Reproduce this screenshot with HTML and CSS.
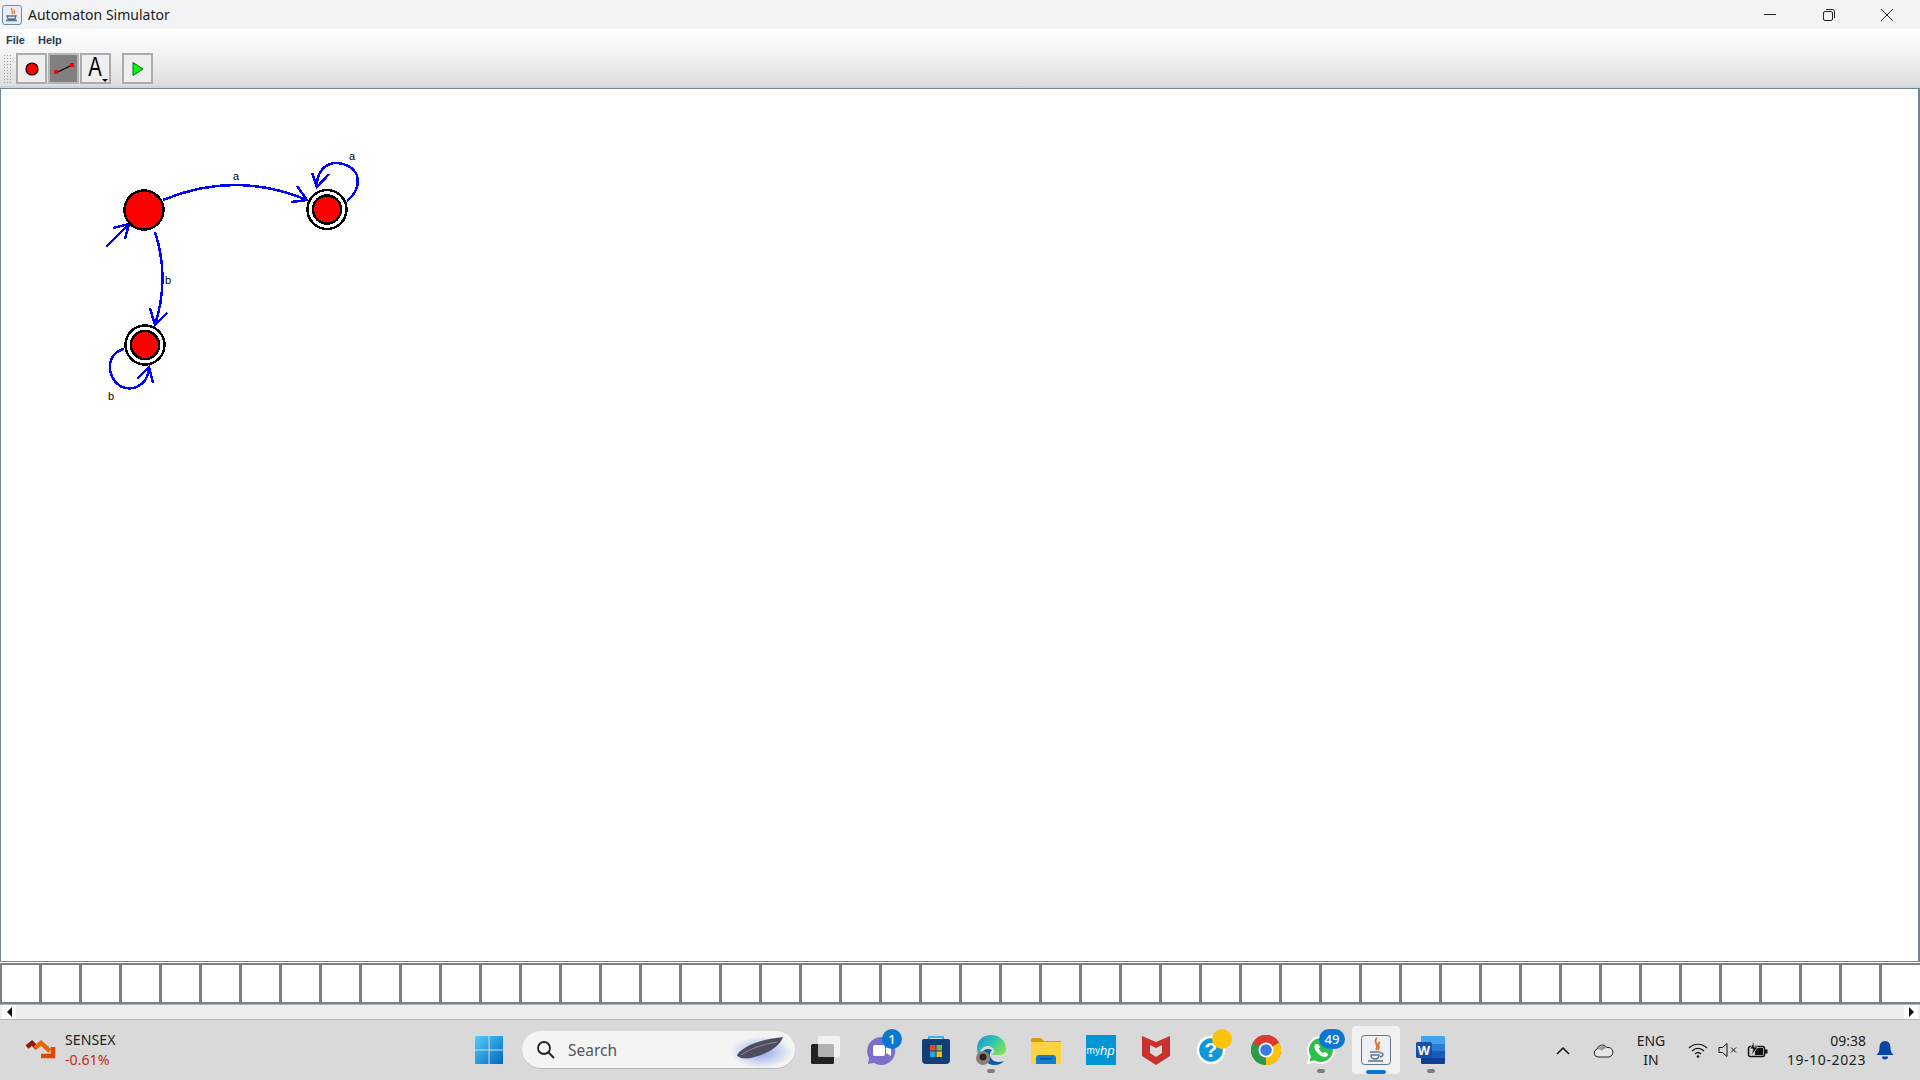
FILE: index.html
```html
<!DOCTYPE html>
<html lang="en">
<head>
<meta charset="utf-8">
<title>Automaton Simulator</title>
<link rel="stylesheet" href="styles.css">
</head>
<body>
<div class="app">
  <header class="titlebar">
    <div class="title-left">
      <svg class="app-icon" width="20" height="20" viewBox="0 0 20 20"><rect x="0.5" y="0.5" width="19" height="19" rx="2.5" fill="#e9edf1" stroke="#6f8aa3"/><path d="M10 3c-2 2 2 3 0 6M12.5 5c-1.500 1 1 2 -.5 4" fill="none" stroke="#d9722a" stroke-width="1.300"/><path d="M5 11h9l-1 3H6zM4 15.500h11" fill="none" stroke="#5b7089" stroke-width="1.300"/></svg>
      <span class="title-text">Automaton Simulator</span>
    </div>
    <div class="win-controls">
      <span class="win-btn"><svg width="14" height="14" viewBox="0 0 14 14"><path d="M1 6.500h12" stroke="#222" stroke-width="1"/></svg></span>
      <span class="win-btn"><svg width="14" height="14" viewBox="0 0 14 14"><rect x="1.500" y="3.500" width="9" height="9" rx="1.500" fill="none" stroke="#222"/><path d="M4 1.500h6.500a2 2 0 0 1 2 2V10" fill="none" stroke="#222"/></svg></span>
      <span class="win-btn"><svg width="14" height="14" viewBox="0 0 14 14"><path d="M1 1l12 12M13 1L1 13" stroke="#222" stroke-width="1"/></svg></span>
    </div>
  </header>

  <div class="chrome">
    <nav class="menubar"><span>File</span><span>Help</span></nav>
    <div class="toolbar">
      <span class="grip"></span>
      <button class="tool"><svg width="14" height="14" viewBox="0 0 14 14"><circle cx="7" cy="7" r="6" fill="#f00" stroke="#000" stroke-width="1.200"/></svg></button>
      <button class="tool tool-on"><svg width="24" height="16" viewBox="0 0 24 16"><path d="M4 12L20 4" stroke="#000" stroke-width="1.200"/><rect x="2" y="9" width="4" height="4" fill="#f00"/><rect x="18" y="2" width="4" height="4" fill="#f00"/></svg></button>
      <button class="tool tool-text"><span class="tool-a">A</span><i class="caret"></i></button>
      <button class="tool tool-play"><svg width="14" height="16" viewBox="0 0 14 16"><path d="M2 1.500l10 6.500-10 6.500z" fill="#0f0" stroke="#063"/></svg></button>
    </div>
  </div>

  <main class="canvas">
    <svg class="diagram" width="500" height="360" viewBox="0 88 500 360">
      <g fill="none" stroke="#00f" stroke-width="2.500">
        <path d="M163 200Q235 170 307 200M297 186L307 200L291 202"/>
        <path d="M155 232Q170 278 155 325M150 308L155 325L167 313"/>
        <path d="M347 201C364 187 361 166 338 163C326 162 316 172 317 187M312 173L317 187L329 174"/>
        <path d="M124 349C106 353 105 378 122 387C136 392 149 382 149 367M137 379L149 367L153 383"/>
        <path d="M106 247L129 224M113 228L129 224L125 239"/>
      </g>
      <g fill="#f00" stroke="#000" stroke-width="2.500">
        <circle cx="144" cy="210" r="19.500"/>
        <circle cx="327" cy="209.500" r="19.500" fill="#fff"/>
        <circle cx="327" cy="209.500" r="14"/>
        <circle cx="145" cy="345" r="19.500" fill="#fff"/>
        <circle cx="145" cy="345" r="14"/>
      </g>
      <g class="edge-label">
        <text x="233" y="180">a</text>
        <text x="349" y="160">a</text>
        <text x="165" y="284">b</text>
        <text x="108" y="400">b</text>
      </g>
    </svg>
  </main>

  <div class="tape">
    <div></div><div></div><div></div><div></div><div></div><div></div><div></div><div></div>
    <div></div><div></div><div></div><div></div><div></div><div></div><div></div><div></div>
    <div></div><div></div><div></div><div></div><div></div><div></div><div></div><div></div>
    <div></div><div></div><div></div><div></div><div></div><div></div><div></div><div></div>
    <div></div><div></div><div></div><div></div><div></div><div></div><div></div><div></div>
    <div></div><div></div><div></div><div></div><div></div><div></div><div></div><div></div>
  </div>

  <div class="hscroll">
    <span class="sb-btn"><i class="tri-left"></i></span>
    <span class="sb-track"></span>
    <span class="sb-btn"><i class="tri-right"></i></span>
  </div>

  <footer class="taskbar">
    <div class="widget">
      <svg width="32" height="20" viewBox="0 0 32 20"><path d="M2 7l5-4 5 5" fill="none" stroke="#8c1d12" stroke-width="4.500"/><path d="M10 8l6-5 9 8" fill="none" stroke="#e8660c" stroke-width="4.500"/><path d="M16 16h12V7" fill="none" stroke="#dd4a00" stroke-width="4.500"/></svg>
      <div class="widget-text"><span>SENSEX</span><span class="down">-0.61%</span></div>
    </div>

    <div class="apps">
      <span class="slot slot-start"><svg width="30" height="30" viewBox="0 0 30 30"><defs><linearGradient id="wg" x1="0" y1="0" x2="1" y2="1"><stop offset="0" stop-color="#52d0fb"/><stop offset="1" stop-color="#0067c0"/></linearGradient></defs><path d="M1 1h13.500v13.500H1zM15.500 1H29v13.500H15.500zM1 15.500h13.500V29H1zM15.500 15.500H29V29H15.500z" fill="url(#wg)"/></svg></span>

      <label class="searchbox">
        <svg width="19" height="19" viewBox="0 0 19 19"><circle cx="8" cy="8" r="6" fill="none" stroke="#222" stroke-width="1.800"/><path d="M12.500 12.500L18 18" stroke="#222" stroke-width="2"/></svg>
        <span class="search-text">Search</span>
        <svg class="comet" width="62" height="36" viewBox="0 0 62 36"><defs><radialGradient id="cg"><stop offset="0" stop-color="#8fa4ea"/><stop offset="1" stop-color="#f4f4f4"/></radialGradient></defs><ellipse cx="32" cy="20" rx="31" ry="16" fill="url(#cg)"/><path d="M8 23C16 12 36 7 54 5c-3 9-15 17-32 21-7 1-13 0-14-3z" fill="#4d4d5e"/><path d="M12 23C22 16 36 12 48 10" stroke="#8a8a9c" fill="none"/></svg>
      </label>

      <span class="slot"><svg width="32" height="30" viewBox="0 0 32 30"><rect x="1" y="9" width="23" height="20" rx="1.500" fill="#222"/><rect x="8" y="1" width="22" height="21" rx="1.500" fill="#fff" fill-opacity=".65"/></svg></span>

      <span class="slot"><svg width="30" height="30" viewBox="0 0 30 30"><path d="M15 2a14 14 0 1 1-7 26l-6 1 1-6A14 14 0 0 1 15 2z" fill="#7b70c9"/><rect x="7" y="10" width="12" height="11" rx="2" fill="#fff"/><path d="M20 13l5-3v11l-5-3z" fill="#fff"/></svg><b class="badge">1</b></span>

      <span class="slot"><svg width="30" height="30" viewBox="0 0 30 30"><path d="M8 5V2h14v3" fill="none" stroke="#3ab4e8" stroke-width="2"/><path d="M1 6a2 2 0 0 1 2-2h24a2 2 0 0 1 2 2v19a4 4 0 0 1-4 4H5a4 4 0 0 1-4-4z" fill="#123f78"/><rect x="9" y="10" width="5.500" height="5.500" fill="#e8452b"/><rect x="15.500" y="10" width="5.500" height="5.500" fill="#7cbb2c"/><rect x="9" y="16.500" width="5.500" height="5.500" fill="#1ea7ea"/><rect x="15.500" y="16.500" width="5.500" height="5.500" fill="#fcba1a"/></svg></span>

      <span class="slot"><svg width="32" height="32" viewBox="0 0 32 32"><defs><linearGradient id="eg" x1="0" y1="0" x2="1" y2=".6"><stop offset="0" stop-color="#1a8fd8"/><stop offset=".55" stop-color="#2fc4b0"/><stop offset="1" stop-color="#7fe05a"/></linearGradient></defs><path d="M2 15C2 6 8 1 16 1c9 0 15 6 15 14 0 5-4 6-8 6-3 0-6 0-7-1 3 0 4-2 3-4-2-4-7-5-10-3-3 2-5 5-5 9-1-2-2-4-2-7z" fill="url(#eg)"/><path d="M8 17C6 24 12 31 19 31c4 0 7-1 10-4-5 2-11 1-13-3-2-3-1-6 1-8-4-2-7-1-9 1z" fill="#0c59a4"/><circle cx="8" cy="24" r="7" fill="#8b8076"/><circle cx="8" cy="23" r="3.500" fill="#2b2622"/></svg><i class="dot"></i></span>

      <span class="slot"><svg width="30" height="30" viewBox="0 0 30 30"><path d="M0 5a2 2 0 0 1 2-2h8l3 3h17v3H0z" fill="#d99a10"/><path d="M0 7h30v21a1 1 0 0 1-1 1H1a1 1 0 0 1-1-1z" fill="#fbd23f"/><path d="M5 29v-6a3 3 0 0 1 3-3h14a3 3 0 0 1 3 3v6z" fill="#0f7fd0"/><rect x="9" y="23" width="12" height="1.500" fill="#0b4d94"/></svg></span>

      <span class="slot"><span class="hp">my<em>hp</em></span></span>

      <span class="slot"><svg width="28" height="30" viewBox="0 0 28 30"><path d="M0 1l14 6 14-6v20l-14 9L0 21z" fill="#c8322c"/><path d="M8 10l6 3 6-3v8l-6 4-6-4z" fill="#d9d9d9"/></svg></span>

      <span class="slot"><svg width="30" height="30" viewBox="0 0 30 30"><circle cx="15" cy="15" r="13" fill="#0f97d8" stroke="#fff" stroke-width="2.500"/><text class="help-q" x="15" y="22">?</text></svg><b class="sun"></b></span>

      <span class="slot"><svg width="30" height="30" viewBox="0 0 30 30"><circle cx="15" cy="15" r="15" fill="#db3a2e"/><path d="M15 15L2 7.500A15 15 0 0 0 15 30z" fill="#2c9a48"/><path d="M15 15V30A15 15 0 0 0 28 7.500z" fill="#fbc40f"/><path d="M15 15L2 7.500A15 15 0 0 1 28 7.500z" fill="#db3a2e"/><circle cx="15" cy="15" r="7.500" fill="#fff"/><circle cx="15" cy="15" r="5.800" fill="#3b78e7"/></svg></span>

      <span class="slot"><svg width="30" height="30" viewBox="0 0 30 30"><path d="M15 2a13 13 0 1 1-6.500 24.300L2 28l1.800-6.400A13 13 0 0 1 15 2z" fill="#2fc04a" stroke="#fff" stroke-width="2"/><path d="M10 9c-2 1-2 4 0 7s6 6 9 6c2 0 3-2 3-3l-3-2-2 1c-2-1-3-2-4-4l1-2-2-3z" fill="#fff"/></svg><b class="badge badge-wide">49</b><i class="dot"></i></span>

      <span class="slot slot-active"><svg width="30" height="30" viewBox="0 0 30 30"><rect x=".5" y=".5" width="29" height="29" rx="3" fill="#eef1f4" stroke="#60748a"/><path d="M16 3c-5 4 3 6-1 12M19 7c-4 2 1 4-2 8" fill="none" stroke="#d9722a" stroke-width="1.700"/><path d="M9 17h10M10 20h8c0 3-2 4-4 4s-4-1-4-4zM19 18c4-1 4 3 0 4M7 26h15" fill="none" stroke="#62758c" stroke-width="1.400"/></svg><i class="dot dot-active"></i></span>

      <span class="slot"><svg width="30" height="30" viewBox="0 0 30 30"><path d="M5 1h23a2 2 0 0 1 1 1v7H5z" fill="#41a5ee"/><rect x="5" y="9" width="24" height="7" fill="#2b7cd3"/><rect x="5" y="16" width="24" height="7" fill="#185abd"/><path d="M5 23h24v5a1 1 0 0 1-1 1H6a1 1 0 0 1-1-1z" fill="#103f91"/><rect x="0" y="7" width="16" height="16" rx="1.500" fill="#1a4fa8"/><text class="word-w" x="8" y="19.500">W</text></svg><i class="dot"></i></span>
    </div>

    <div class="tray">
      <svg class="tray-chev" width="14" height="9" viewBox="0 0 14 9"><path d="M1 8l6-6 6 6" fill="none" stroke="#111" stroke-width="1.500"/></svg>
      <svg class="tray-cloud" width="21" height="15" viewBox="0 0 21 15"><path d="M5 14a4 4 0 0 1-1-7.800A5.500 5.500 0 0 1 14 4.500 4.500 4.500 0 0 1 16 14z" fill="#e6e6e6" stroke="#222"/><path d="M4.500 6.500A5.500 5.500 0 0 1 14 5c-3 0-4 2-5 3-1-1-3-2-4.500-1.500z" fill="#999"/></svg>
      <div class="lang"><span>ENG</span><span>IN</span></div>
      <svg class="tray-wifi" width="20" height="16" viewBox="0 0 20 16"><path d="M1 6c5-5 13-5 18 0M4 9c3.500-3.500 8.500-3.500 12 0M7 12c2-2 4-2 6 0" fill="none" stroke="#111" stroke-width="1.200"/><circle cx="10" cy="14.500" r="1.300" fill="#111"/></svg>
      <svg class="tray-sound" width="20" height="16" viewBox="0 0 20 16"><path d="M1 5.500h3.500L9 1.500v13l-4.500-4H1z" fill="none" stroke="#111"/><path d="M13 5.500l5 5M18 5.500l-5 5" stroke="#111"/></svg>
      <svg class="tray-batt" width="21" height="18" viewBox="0 0 21 18"><rect x="1.500" y="5.500" width="16" height="10" rx="2" fill="#cfcfcf" stroke="#111" stroke-width="1.500"/><rect x="8" y="7" width="8" height="7" fill="#111"/><rect x="18" y="8.500" width="2.500" height="4" fill="#111"/><path d="M7 0L3 8h3l-2 7 7-9H7z" fill="#111" stroke="#d9d9d9" stroke-width=".8"/></svg>
      <div class="clock"><span>09:38</span><span class="date">19-10-2023</span></div>
      <svg class="tray-bell" width="18" height="20" viewBox="0 0 18 20"><path d="M9 1C5 1 3.500 4 3.500 8c0 3-1 5-3 7h17c-2-2-3-4-3-7 0-4-1.500-7-5.500-7z" fill="#0a46a8"/><path d="M6 16.500h6a3 3 0 0 1-6 0z" fill="#0a46a8"/></svg>
    </div>
  </footer>
</div>
</body>
</html>
```
FILE: styles.css
```css
* { box-sizing: border-box; margin: 0; padding: 0; }
html, body { width: 100%; height: 100%; overflow: hidden; }
body { font-family: "Noto Sans", "Open Sans", sans-serif; color: #111; background: #fff; }
.app { width: 1920px; height: 1080px; display: flex; flex-direction: column; }

.titlebar { height: 29px; flex: none; background: #f2f3f4; display: flex; justify-content: space-between; align-items: center; }
.title-left { display: flex; align-items: center; gap: 6px; padding-left: 2px; }
.title-text { font-size: 14px; color: #1a1a1a; }
.win-controls { display: flex; padding-right: 3.500px; }
.win-btn { width: 58.500px; height: 29px; display: flex; align-items: center; justify-content: center; }

.chrome { height: 59px; flex: none; background: linear-gradient(#ffffff 0%, #f7f7f7 30%, #dedede 100%); border-bottom: 2px solid #d2d2d2; }
.menubar { height: 23px; display: flex; align-items: center; gap: 13px; padding: 0 0 2px 6px; font-family: "Liberation Sans", Arial, sans-serif; font-size: 11px; font-weight: 700; color: #2a3a50; }
.toolbar { display: flex; align-items: center; height: 31px; margin-top: 1px; padding-left: 3px; }
.grip { width: 9px; height: 30px; margin-right: 4px; background-image: radial-gradient(#9a9a9a 0.8px, transparent 1px); background-size: 3px 3px; }
.tool { width: 31px; height: 31px; margin-right: 1px; border: 2px solid #ababab; background: #eeeeee; display: flex; align-items: center; justify-content: center; font-family: "Liberation Sans", Arial, sans-serif; position: relative; }
.tool-on { background: #808080; border-color: #b5b5b5; }
.tool-a { font-size: 27px; line-height: 1; color: #000; transform: scaleX(.75); margin-top: -3px; }
.caret { position: absolute; right: 1px; bottom: 0; width: 0; height: 0; border-left: 3px solid transparent; border-right: 3px solid transparent; border-top: 3px solid #000; }
.tool-play { margin-left: 10px; }

.canvas { flex: 1; min-height: 0; background: #fff; border: 1px solid #71869b; border-width: 1px 2px 1px 1px; position: relative; overflow: hidden; }
.diagram { position: absolute; left: -1px; top: -1px; shape-rendering: crispEdges; }
.edge-label text { font-family: "Liberation Sans", Arial, sans-serif; font-size: 11px; fill: #000; }

.tape { height: 41px; flex: none; margin-top: 1px; display: flex; background: #fff; border-top: 2px solid #808080; border-bottom: 2px solid #808080; }
.tape div { width: 40px; flex: none; border-right: 3px solid #808080; }
.tape div:first-child { width: 42px; border-left: 2px solid #808080; }
.tape div:last-child { width: 38px; border-right: 0; }

.hscroll { height: 15px; flex: none; display: flex; padding: 0 2px; background: #eeeeee; border-top: 1px solid #a5b8cb; }
.sb-btn { width: 14px; height: 14px; background: #fdfdfd; display: flex; align-items: center; justify-content: center; }
.sb-track { flex: 1; }
.tri-left { border-top: 5px solid transparent; border-bottom: 5px solid transparent; border-right: 5px solid #111; }
.tri-right { border-top: 5px solid transparent; border-bottom: 5px solid transparent; border-left: 5px solid #111; }

.taskbar { height: 61px; flex: none; background: #d9d9d9; border-top: 1px solid #adb5bd; display: flex; align-items: center; justify-content: space-between; position: relative; }
.widget { width: 300px; display: flex; align-items: center; gap: 8px; padding-left: 25px; font-size: 14.200px; line-height: 20px; }
.widget-text { display: flex; flex-direction: column; color: #222; }
.down { color: #c42b1c; }

.apps { position: absolute; left: 461px; top: 0; height: 60px; display: flex; align-items: center; }
.slot { width: 55px; height: 48px; display: flex; align-items: center; justify-content: center; position: relative; }
.slot-start { margin-right: 6px; }
.slot-active { background: #f0f0f0; border-radius: 4px; width: 48px; margin: 0 3.500px; }
.searchbox { width: 273px; height: 38px; margin-right: 3px; background: #f4f4f4; border-radius: 19px; border-bottom: 1px solid #b5b5b5; display: flex; align-items: center; padding: 0 4px 0 14px; }
.search-text { margin-left: 13px; flex: 1; font-size: 15.500px; color: #555; }
.badge { position: absolute; top: 3px; left: 29px; width: 20px; height: 20px; border-radius: 10px; background: #0a78d2; color: #fff; font-size: 13px; font-weight: 500; line-height: 20px; text-align: center; }
.badge-wide { width: 26px; left: 26px; }
.sun { position: absolute; top: 3px; left: 29px; width: 20px; height: 20px; border-radius: 50%; background: #fdc20a; }
.dot { position: absolute; bottom: 1px; left: 23.500px; width: 8px; height: 4px; border-radius: 2px; background: #7f7f7f; }
.dot-active { width: 20px; left: 14px; background: #0a78d2; bottom: 0; }
.hp { width: 30px; height: 30px; background: #0096d6; color: #fff; font-size: 10px; display: flex; align-items: center; justify-content: center; font-family: "Liberation Sans", Arial, sans-serif; }
.hp em { font-size: 13px; font-weight: 400; }
.help-q { font: 700 21px "Liberation Sans", Arial, sans-serif; fill: #fff; text-anchor: middle; }
.word-w { font: 700 13px "Liberation Sans", Arial, sans-serif; fill: #fff; text-anchor: middle; }

.tray { position: absolute; right: 0; top: 0; height: 60px; width: 374px; display: flex; align-items: center; font-size: 14px; line-height: 19px; color: #222; }
.tray-chev { margin-left: 10px; }
.tray-cloud { margin-left: 23px; }
.lang { width: 64px; margin-left: 5px; display: flex; flex-direction: column; align-items: center; }
.tray-wifi { margin-left: 5px; }
.tray-sound { margin-left: 10px; }
.tray-batt { margin-left: 9px; }
.clock { width: 90px; margin-left: 8px; display: flex; flex-direction: column; align-items: flex-end; }
.date { letter-spacing: .6px; }
.tray-bell { margin-left: 10px; }
```
